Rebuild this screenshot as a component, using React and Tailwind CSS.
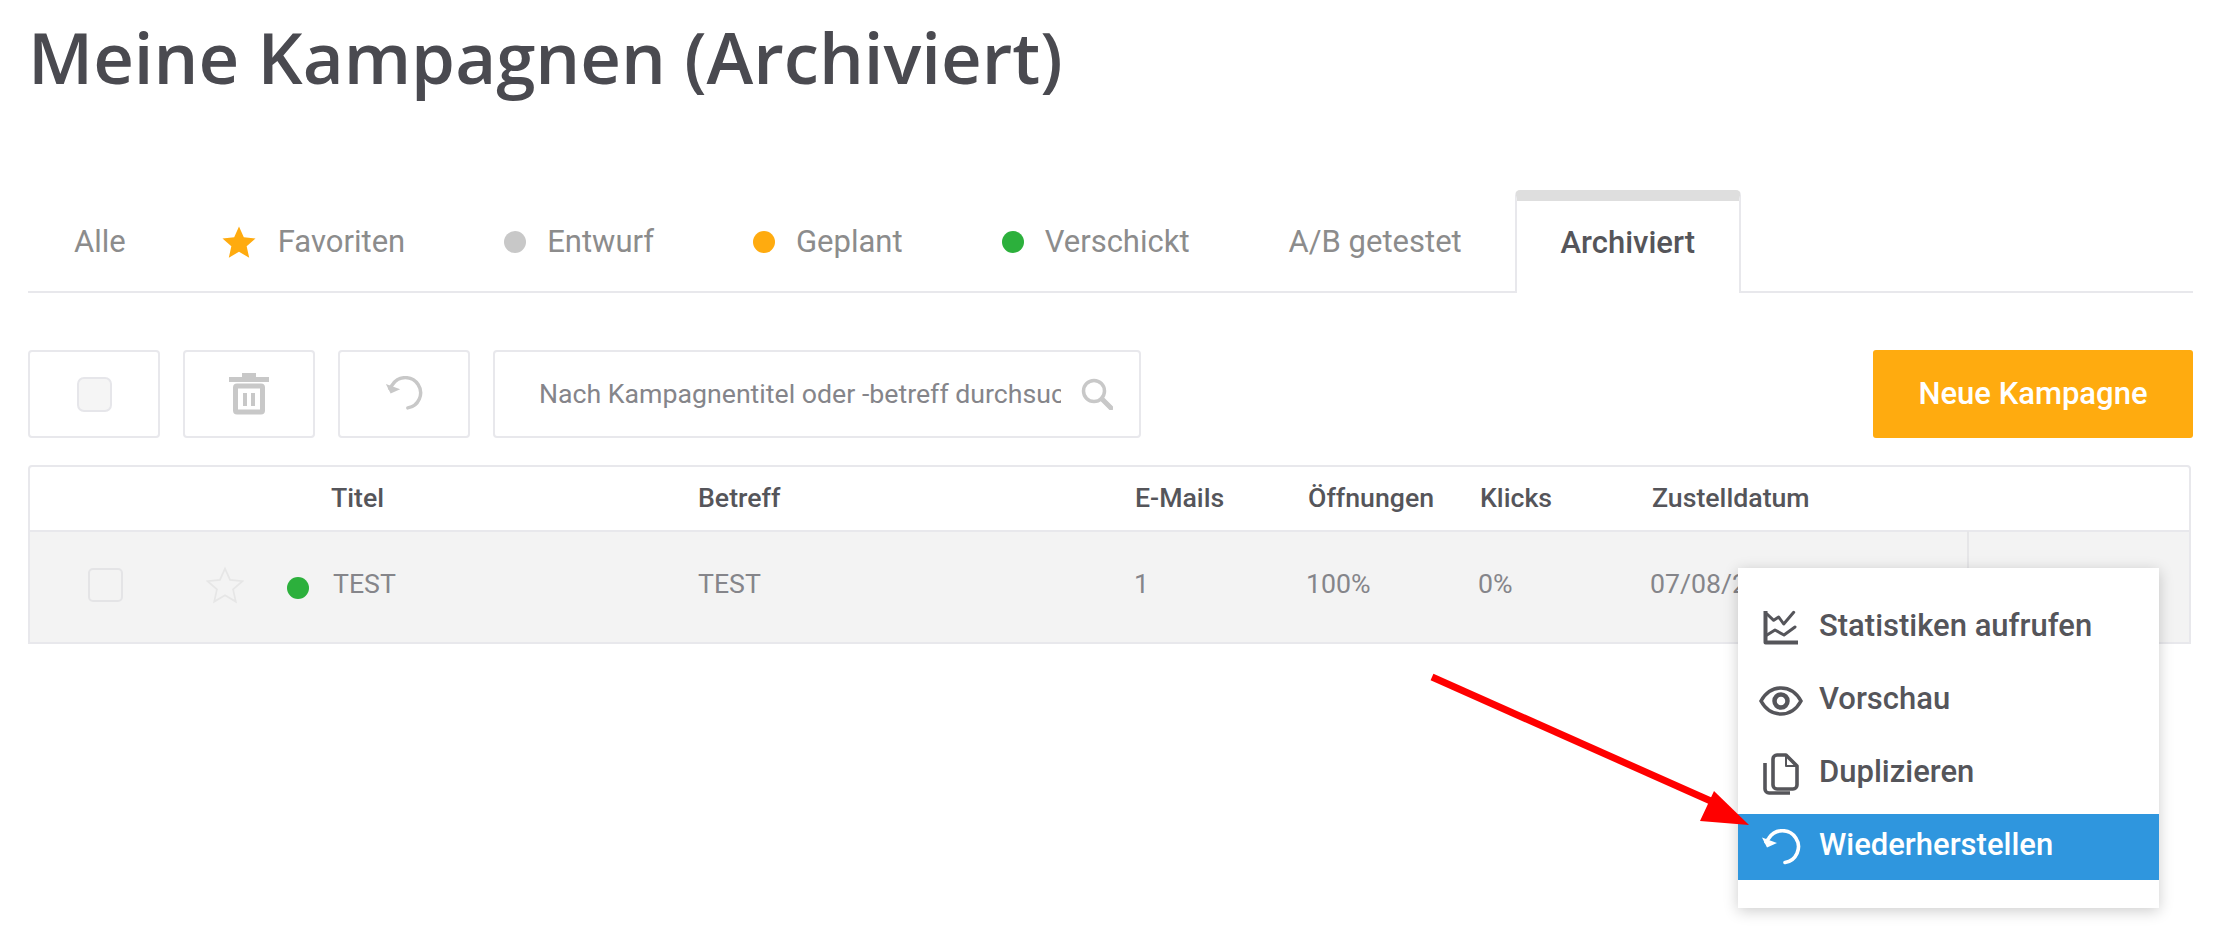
import React from "react";

const sans = "font-['Roboto',sans-serif]";

function Dot({ className }) {
  return <span className={`inline-block h-[22px] w-[22px] shrink-0 rounded-full ${className}`} />;
}

function Star({ filled }) {
  return (
    <svg viewBox="0 0 24 24" className={`shrink-0 ${filled ? "h-[36px] w-[36px]" : "h-[38px] w-[38px]"}`}>
      <path
        d="M12 1.6l3.2 7.2 7.8.8-5.9 5.2 1.7 7.7L12 18.5l-6.8 4 1.7-7.7L1 9.6l7.8-.8z"
        fill={filled ? "#ffab0f" : "none"}
        stroke={filled ? "#ffab0f" : "#e6e6e6"}
        strokeWidth={filled ? 0 : 1.1}
      />
    </svg>
  );
}

function Undo({ color, w = 40, sw = 3.6 }) {
  return (
    <svg viewBox="0 0 42 37" style={{ width: w }} className="shrink-0">
      <path d="M25 33.5A16 16 0 1 0 9 9L6 13" fill="none" stroke={color} strokeWidth={sw} strokeLinecap="round" />
      <path d="M2 8.5L7 18.5L17 14Z" fill={color} />
    </svg>
  );
}

function Trash() {
  return (
    <svg viewBox="0 0 40 42" className="h-[42px] w-[40px]">
      <rect x="13" y="0" width="14" height="5" fill="#c8c8c8" />
      <rect x="0" y="4" width="40" height="5" fill="#c8c8c8" />
      <rect x="6.5" y="13" width="27" height="26" rx="1.5" fill="none" stroke="#c8c8c8" strokeWidth="5" />
      <rect x="14" y="20" width="4" height="13" fill="#c8c8c8" />
      <rect x="22" y="20" width="4" height="13" fill="#c8c8c8" />
    </svg>
  );
}

function ChartIcon() {
  return (
    <svg viewBox="0 0 36 36" className="h-[36px] w-[36px]" fill="none" stroke="#55555a" strokeLinejoin="round">
      <path d="M2.5 1V32.5H35" strokeWidth="4" />
      <path d="M4 4L10.7 10.3L15.7 7L20.7 14L30.7 2.3" strokeWidth="3" strokeLinecap="round" />
      <path d="M4 25L12 20L21 25L32 17" strokeWidth="3" strokeLinecap="round" />
    </svg>
  );
}

function EyeIcon() {
  return (
    <svg viewBox="0 0 44 30" className="h-[30px] w-[44px]" fill="none" stroke="#55555a">
      <path d="M2 15C7 6 14 2 22 2s15 4 20 13c-5 9-12 13-20 13S7 24 2 15Z" strokeWidth="3.6" />
      <circle cx="22" cy="15" r="6.5" strokeWidth="4.5" />
    </svg>
  );
}

function CopyIcon() {
  return (
    <svg viewBox="0 0 36 42" className="h-[42px] w-[36px]" fill="none" stroke="#55555a" strokeLinejoin="round">
      <path d="M2 10V36a4 4 0 0 0 4 4H27" strokeWidth="3.6" />
      <path d="M10 6a4 4 0 0 1 4-4H23L34 13V32a4 4 0 0 1-4 4H14a4 4 0 0 1-4-4Z" strokeWidth="3.6" />
      <path d="M23 2V13H34" strokeWidth="2" />
    </svg>
  );
}

function MenuItem({ icon, label, active }) {
  return (
    <div className={`flex h-[66px] items-center ${active ? "bg-[#2f96de] text-white" : "text-[#55555a]"}`}>
      <div className="flex w-[81px] shrink-0 items-center justify-center pl-[5px]">{icon}</div>
      <span className="pb-[5px] text-[31px] font-medium leading-none">{label}</span>
    </div>
  );
}

const tabs = [
  { label: "Alle", pad: "pl-[46px] pr-[42px]" },
  { label: "Favoriten", pad: "px-[46px]", icon: <Star filled /> },
  { label: "Entwurf", pad: "px-[46px]", icon: <Dot className="bg-[#c8c8c8]" /> },
  { label: "Geplant", pad: "px-[46px]", icon: <Dot className="bg-[#ffab0f]" /> },
  { label: "Verschickt", pad: "px-[46px]", icon: <Dot className="bg-[#2cb03c]" /> },
  { label: "A/B getestet", pad: "px-[46px]" },
];

export default function App() {
  return (
    <div className={`relative h-[944px] w-[2224px] overflow-hidden bg-white pl-[28px] pr-[31px] ${sans}`}>
      <h1 className="pt-[14px] font-['Open_Sans',sans-serif] text-[70.7px] font-semibold leading-[86px] text-[#4a4a50]">
        Meine Kampagnen (Archiviert)
      </h1>

      <div className="mt-[90px] flex h-[103px] gap-[7px] border-b-2 border-[#e8e8ec]">
        {tabs.map((t) => (
          <div key={t.label} className={`flex h-[101px] items-center gap-[21px] pt-[3px] text-[31px] text-[#8c8c8c] ${t.pad}`}>
            {t.icon}
            <span className="whitespace-nowrap">{t.label}</span>
          </div>
        ))}
        <div className="z-10 flex h-[103px] w-[226px] items-center justify-center rounded-t-[5px] border-x-2 border-t-[11px] border-x-[#e8e8ec] border-t-[#dedede] bg-white pb-[8px] text-[31px] font-medium text-[#55555a]">
          Archiviert
        </div>
      </div>

      <div className="mt-[57px] flex h-[88px] gap-[23px]">
        <div className="flex w-[132px] items-center justify-center rounded-[4px] border-2 border-[#e8e8ec]">
          <span className="h-[35px] w-[35px] rounded-[7px] border-2 border-[#e6e6ea] bg-[#f5f5f5]" />
        </div>
        <div className="flex w-[132px] items-center justify-center rounded-[4px] border-2 border-[#e8e8ec]">
          <Trash />
        </div>
        <div className="flex w-[132px] items-center justify-center rounded-[4px] border-2 border-[#e8e8ec]">
          <Undo color="#c8c8c8" />
        </div>
        <div className="flex w-[648px] items-center rounded-[4px] border-2 border-[#e8e8ec] pl-[44px] pr-[26px]">
          <input
            readOnly
            placeholder="Nach Kampagnentitel oder -betreff durchsuchen"
            className="min-w-0 flex-1 bg-transparent text-[26.7px] outline-none placeholder:text-[#85858a]"
          />
          <svg viewBox="0 0 32 32" className="ml-[20px] h-[32px] w-[32px] shrink-0" fill="none" stroke="#c8c8c8">
            <circle cx="13" cy="13" r="10.5" strokeWidth="3.5" />
            <path d="M21 21L30 30" strokeWidth="5" strokeLinecap="round" />
          </svg>
        </div>
        <button className="ml-auto flex w-[320px] items-center justify-center rounded-[3px] bg-[#ffab0f] text-[31px] font-medium text-white">
          Neue Kampagne
        </button>
      </div>

      <div className="mr-[2px] mt-[27px] h-[179px] rounded-t-[4px] border-x-2 border-y-2 border-[#e8e8ec]">
        <div className="flex h-[63px] items-center text-[26.7px] font-medium text-[#55555a]">
          <span className="ml-[301px] w-[367px]">Titel</span>
          <span className="w-[437px]">Betreff</span>
          <span className="w-[173px]">E-Mails</span>
          <span className="w-[172px]">Öffnungen</span>
          <span className="w-[172px]">Klicks</span>
          <span>Zustelldatum</span>
        </div>
        <div className="flex h-[112px] items-center border-t-2 border-[#e8e8ec] bg-[#f3f3f3] pb-[5px] text-[26.7px] text-[#85858a]">
          <span className="ml-[58px] h-[34px] w-[35px] rounded-[5px] border-2 border-[#e4e4e6]" />
          <span className="ml-[83px] flex"><Star /></span>
          <span className="ml-[43px] flex"><Dot className="mt-[6px] bg-[#2cb03c]" /></span>
          <span className="ml-[24px] w-[365px]">TEST</span>
          <span className="w-[436px]">TEST</span>
          <span className="w-[172px]">1</span>
          <span className="w-[172px]">100%</span>
          <span className="w-[172px]">0%</span>
          <span className="w-[317px] whitespace-nowrap">07/08/2019</span>
          <span className="-mb-[5px] h-[112px] w-[2px] bg-[#e6e6e8]" />
        </div>
      </div>

      <div className="absolute left-[1738px] top-[568px] h-[340px] w-[421px] bg-white pt-[27px] shadow-[0_3px_14px_rgba(0,0,0,0.2)]">
        <div className="flex flex-col gap-[7px]">
          <MenuItem icon={<ChartIcon />} label="Statistiken aufrufen" />
          <MenuItem icon={<EyeIcon />} label="Vorschau" />
          <MenuItem icon={<CopyIcon />} label="Duplizieren" />
          <MenuItem icon={<Undo color="#ffffff" w={42} />} label="Wiederherstellen" active />
        </div>
      </div>

      <svg className="absolute left-0 top-0 h-[944px] w-[2224px]" viewBox="0 0 2224 944">
        <path d="M1432 677L1722 806" stroke="#ff0000" strokeWidth="7" />
        <path d="M1749 825L1700 821L1714 791Z" fill="#ff0000" />
      </svg>
    </div>
  );
}
